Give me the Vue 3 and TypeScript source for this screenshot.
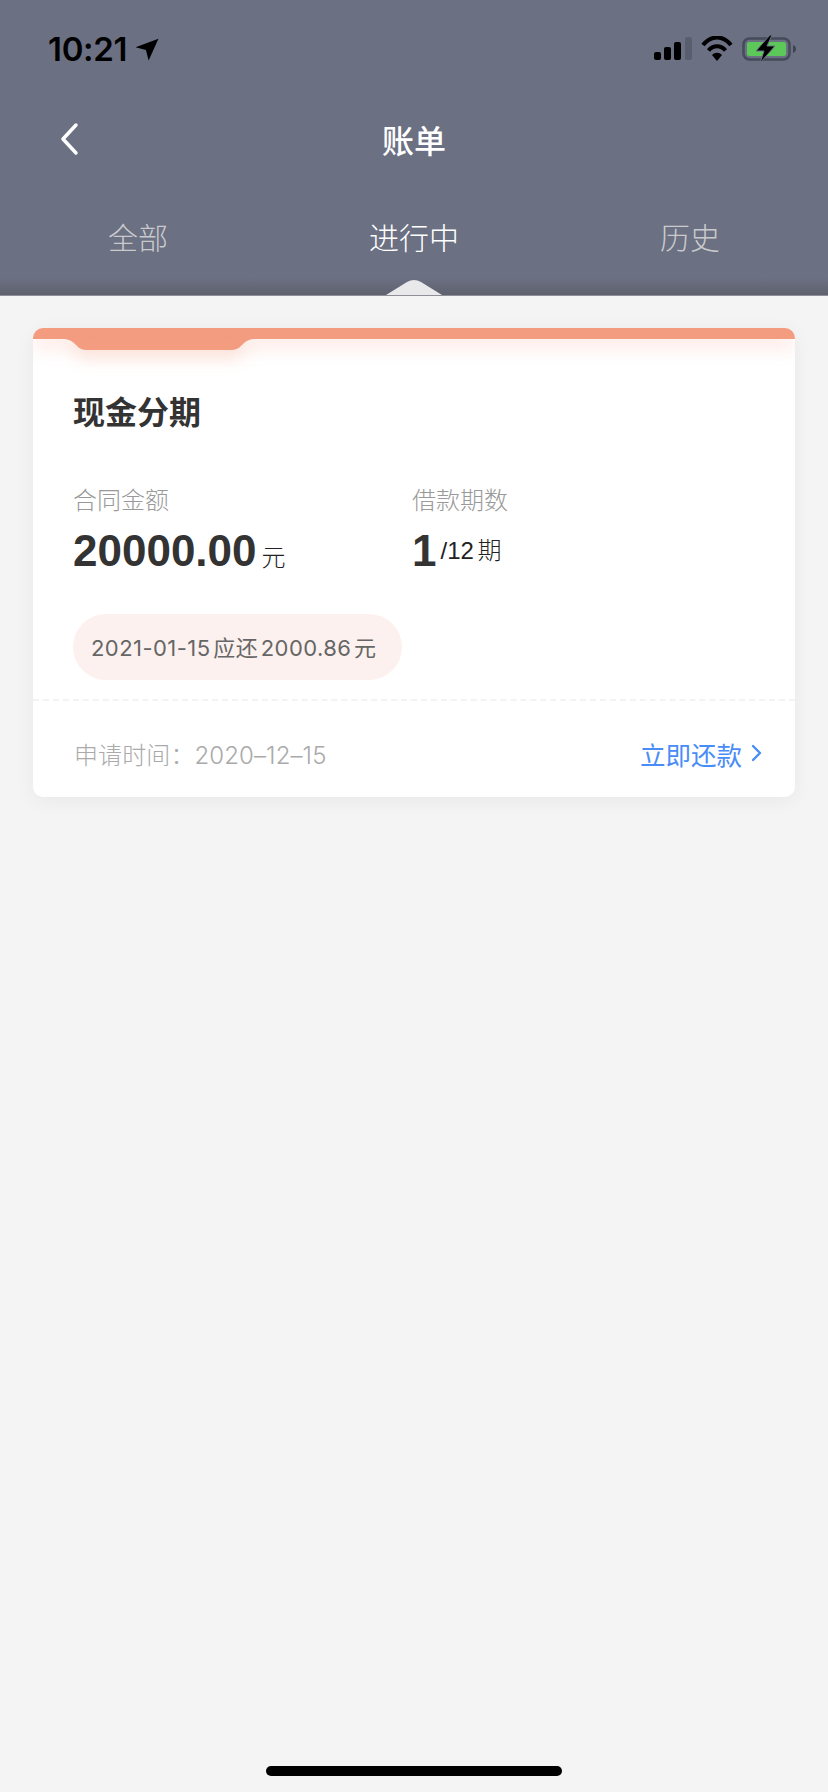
<template>
  <div class="page">
    <header class="top">
      <div class="status-bar">
        <div class="time">
          <span>10:21</span>
          <svg width="24" height="24" viewBox="0 0 22 22">
            <path d="M21.500 1.500 0.500 9.500 10 12 12.500 21.500Z" fill="#000" />
          </svg>
        </div>
        <div class="status-icons">
          <svg width="38" height="24" viewBox="0 0 38 24">
            <rect x="0" y="15" width="7" height="8" rx="2" fill="#000" />
            <rect x="10" y="10" width="7" height="13" rx="2" fill="#000" />
            <rect x="20" y="5" width="7" height="18" rx="2" fill="#000" />
            <rect x="31" y="0" width="7" height="23" rx="2" fill="#000" opacity="0.16" />
          </svg>
          <svg width="32" height="26" viewBox="0 0 32 26">
            <path d="M2 9C10-1 22-1 30 9" fill="none" stroke="#000" stroke-width="4" />
            <path d="M7.500 14.500C12 8.800 20 8.800 24.500 14.500" fill="none" stroke="#000" stroke-width="4" />
            <path d="M11 19C14 16 18 16 21 19L16 25Z" fill="#000" />
          </svg>
          <svg width="54" height="28" viewBox="0 0 54 28">
            <rect x="1.500" y="3.500" width="46" height="21" rx="6" fill="none" stroke="#464a59" stroke-width="2.500" />
            <rect x="5" y="7" width="39" height="14" rx="2" fill="#5cc85a" />
            <path d="M51 10c2 .8 3 2.200 3 4s-1 3.200-3 4Z" fill="#3f4350" />
            <path d="M28 0 14 16h8l-4 12 15-17h-8l5-11Z" fill="#000" stroke="#6b7083" stroke-width="1" />
          </svg>
        </div>
      </div>
      <div class="nav">
        <svg class="back" width="20" height="34" viewBox="0 0 20 34">
          <path d="M17 3 4 17l13 14" fill="none" stroke="#fff" stroke-width="3.500" stroke-linecap="round" stroke-linejoin="round" />
        </svg>
        <h1>账单</h1>
      </div>
      <nav class="tabs">
        <div v-for="tab in tabs" :key="tab" class="tab" :class="{ active: tab === current }">
          {{ tab }}
          <svg v-if="tab === current" class="caret" width="56" height="16" viewBox="0 0 56 16">
            <path d="M0 16 21 3Q28-1 35 3L56 16Z" fill="#e9e9ec" />
          </svg>
        </div>
      </nav>
    </header>

    <main class="content">
      <section class="card">
        <div class="band"></div>
        <svg class="notch" width="194" height="11" viewBox="0 0 194 11">
          <path d="M0 0C7 0 9 2 12 4 15 7 18 11 24 11H170C176 11 179 7 182 4 185 2 187 0 194 0Z" fill="#f49c80" />
        </svg>
        <div class="body">
          <h2>现金分期</h2>
          <div class="stats">
            <div class="stat">
              <div class="label">合同金额</div>
              <div class="value"><b>20000.00</b><span>元</span></div>
            </div>
            <div class="stat">
              <div class="label">借款期数</div>
              <div class="value"><b>1</b><span class="term">/12 期</span></div>
            </div>
          </div>
          <div class="due">2021-01-15 应还 2000.86 元</div>
        </div>
        <div class="footer">
          <span class="date">申请时间：2020–12–15</span>
          <span class="repay">
            立即还款
            <svg width="12" height="20" viewBox="0 0 12 20">
              <path d="M2 3l7 7-7 7" fill="none" stroke="#4a8cf7" stroke-width="2.400" stroke-linecap="round" stroke-linejoin="round" />
            </svg>
          </span>
        </div>
      </section>
      <div class="home-bar"></div>
    </main>
  </div>
</template>

<script setup lang="ts">
import { ref } from 'vue';

const tabs = ['全部', '进行中', '历史'];
const current = ref('进行中');
</script>

<style>
body {
  background: #f4f4f4;
}
</style>

<style scoped>
.page {
  display: flex;
  flex-direction: column;
  width: 828px;
  height: 1792px;
  overflow: hidden;
  background: #f4f4f4;
  font-family: "Liberation Sans", "Noto Sans CJK SC", sans-serif;
}

.top {
  flex-shrink: 0;
  height: 296px;
  background: linear-gradient(#6b7083 0, #6b7083 278px, #5f616d 295px);
  border-bottom: 1px solid #8d8e96;
  box-sizing: border-box;
}

.status-bar {
  display: flex;
  justify-content: space-between;
  align-items: center;
  height: 50px;
  padding: 24px 32px 0 48px;
}

.time {
  display: flex;
  align-items: center;
  gap: 8px;
  font-family: Inter, sans-serif;
  font-size: 33px;
  font-weight: 600;
  letter-spacing: -0.3px;
  color: #000;
}

.status-icons {
  display: flex;
  align-items: center;
  gap: 9px;
}

.nav {
  position: relative;
  display: flex;
  justify-content: center;
  align-items: center;
  height: 92px;
  margin-top: 19px;
}

.back {
  position: absolute;
  left: 59px;
  top: 29px;
}

h1 {
  margin: 0;
  font-size: 32px;
  font-weight: 500;
  color: #fff;
}

.tabs {
  display: grid;
  grid-template-columns: repeat(3, 1fr);
  padding-top: 23px;
}

.tab {
  position: relative;
  height: 87px;
  line-height: 62px;
  text-align: center;
  font-size: 30px;
  font-weight: 300;
  color: #cacacc;
}

.tab.active {
  color: #fff;
}

.caret {
  position: absolute;
  left: 110px;
  top: 71px;
}

.content {
  position: relative;
  flex: 1;
  display: flex;
  flex-direction: column;
  padding: 32px 33px 16px;
}

.card {
  position: relative;
  height: 469px;
  box-sizing: border-box;
  overflow: hidden;
  border-radius: 10px;
  background: #fff;
  box-shadow: 0 4px 20px rgba(0, 0, 0, 0.05);
}

.band {
  position: relative;
  height: 11px;
  background: #f49c80;
  box-shadow: 0 8px 18px rgba(244, 156, 128, 0.28);
}

.notch {
  position: absolute;
  left: 29px;
  top: 11px;
  filter: drop-shadow(0 8px 8px rgba(244, 156, 128, 0.32));
}

.body {
  padding: 0 40px;
  height: 362px;
  box-sizing: border-box;
  border-bottom: 2px dashed #f3f3f3;
}

h2 {
  margin: 0;
  padding-top: 53px;
  height: 36px;
  line-height: 42px;
  font-size: 32px;
  font-weight: 700;
  color: #333;
}

.stats {
  display: grid;
  grid-template-columns: 339px 1fr;
  margin-top: 57px;
}

.label {
  font-size: 24px;
  line-height: 32px;
  font-weight: 300;
  color: #999;
}

.value {
  display: flex;
  align-items: baseline;
  margin-top: 8px;
  line-height: 52px;
}

.value b {
  font-size: 44px;
  color: #333;
}

.value span {
  margin-left: 5px;
  font-size: 24px;
  font-weight: 300;
  color: #222;
}

.value .term {
  align-self: center;
  margin-left: 4px;
  word-spacing: -3px;
}

.due {
  display: flex;
  align-items: center;
  width: 329px;
  height: 66px;
  margin-top: 30px;
  padding: 0 0 2px 18px;
  box-sizing: border-box;
  border-radius: 33px;
  background: #fcf1ee;
  font-family: Inter, "Noto Sans CJK SC", sans-serif;
  font-size: 22px;
  letter-spacing: 0.45px;
  color: #666;
  white-space: pre;
  word-spacing: -4px;
}

.footer {
  display: flex;
  justify-content: space-between;
  align-items: center;
  height: 96px;
  box-sizing: border-box;
  padding: 8px 32px 0 41px;
}

.date {
  font-family: Inter, "Noto Sans CJK SC", sans-serif;
  font-size: 24px;
  font-weight: 300;
  letter-spacing: 0.1px;
  color: #aaa;
}

.repay {
  display: flex;
  align-items: center;
  gap: 9px;
  font-size: 25.500px;
  color: #4a8cf7;
}

.home-bar {
  width: 296px;
  height: 10px;
  margin: auto auto 0;
  border-radius: 5px;
  background: #000;
}
</style>
